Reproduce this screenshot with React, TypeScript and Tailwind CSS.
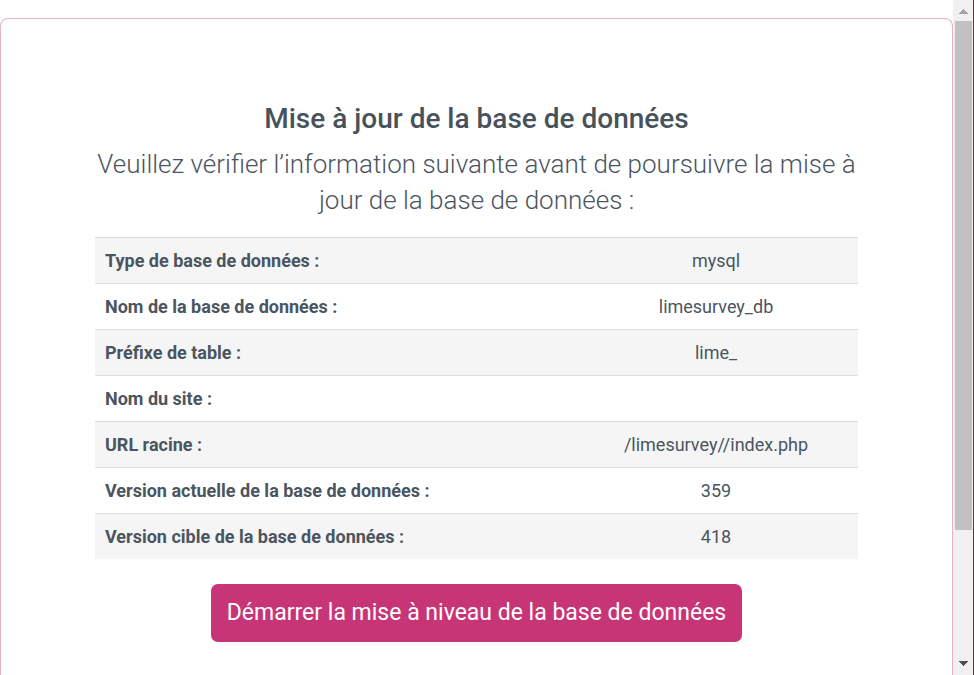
const rows = [
  { label: "Type de base de données :", value: "mysql" },
  { label: "Nom de la base de données :", value: "limesurvey_db" },
  { label: "Préfixe de table :", value: "lime_" },
  { label: "Nom du site :", value: "" },
  { label: "URL racine :", value: "/limesurvey//index.php" },
  { label: "Version actuelle de la base de données :", value: "359" },
  { label: "Version cible de la base de données :", value: "418" },
];

function Scrollbar() {
  return (
    <div aria-hidden="true" className="flex w-[21px] shrink-0 flex-col items-center border-r border-[#5f3a3c] bg-[#f0f0f0]">
      <svg className="h-[21px] w-[9px] shrink-0" viewBox="0 0 9 21" shapeRendering="crispEdges">
        <path d="M0 14V13H1V12H2V11H3V10H4V9H5V10H6V11H7V12H8V13H9V14Z" fill="#a3a3a3" />
      </svg>
      <div className="flex w-full grow flex-col px-[2px] pr-px">
        <div className="h-[80%] bg-[#c1c1c1]" />
      </div>
      <svg className="h-[18px] w-[9px] shrink-0" viewBox="0 0 9 18" shapeRendering="crispEdges">
        <path d="M0 4H9V5H8V6H7V7H6V8H5V9H4V8H3V7H2V6H1V5H0Z" fill="#505050" />
      </svg>
    </div>
  );
}

export default function App() {
  return (
    <div className="flex h-screen overflow-hidden bg-white font-['Roboto',sans-serif] text-lg text-[#4b555f]">
      <main className="flex min-w-0 grow flex-col pt-[18px]">
        <section className="flex grow flex-col items-center rounded-t-lg border border-b-0 border-[#e8b0cb] px-[94px] pt-[84px] text-center">
          <h1 className="text-[28px] leading-8 font-medium text-[#47525b]">Mise à jour de la base de données</h1>
          <p className="mt-[11px] mb-[19px] text-[26px] leading-9 font-light">
            Veuillez vérifier l’information suivante avant de poursuivre la mise à jour de la base de données :
          </p>
          <table className="w-full table-fixed border-collapse leading-[25px]">
            <colgroup>
              <col />
              <col className="w-[284px]" />
            </colgroup>
            <tbody>
              {rows.map((row) => (
                <tr key={row.label} className="border-t border-[#dddddd] odd:bg-[#f5f5f5]">
                  <th scope="row" className="px-[10px] py-[10px] text-left font-bold">{row.label}</th>
                  <td className="px-[10px] py-[10px]">{row.value}</td>
                </tr>
              ))}
            </tbody>
          </table>
          <button type="button" className="mt-[25px] h-[58px] shrink-0 rounded-[7px] bg-[#c83577] px-4 text-[23px] leading-8 text-white">
            Démarrer la mise à niveau de la base de données
          </button>
        </section>
      </main>
      <Scrollbar />
    </div>
  );
}
